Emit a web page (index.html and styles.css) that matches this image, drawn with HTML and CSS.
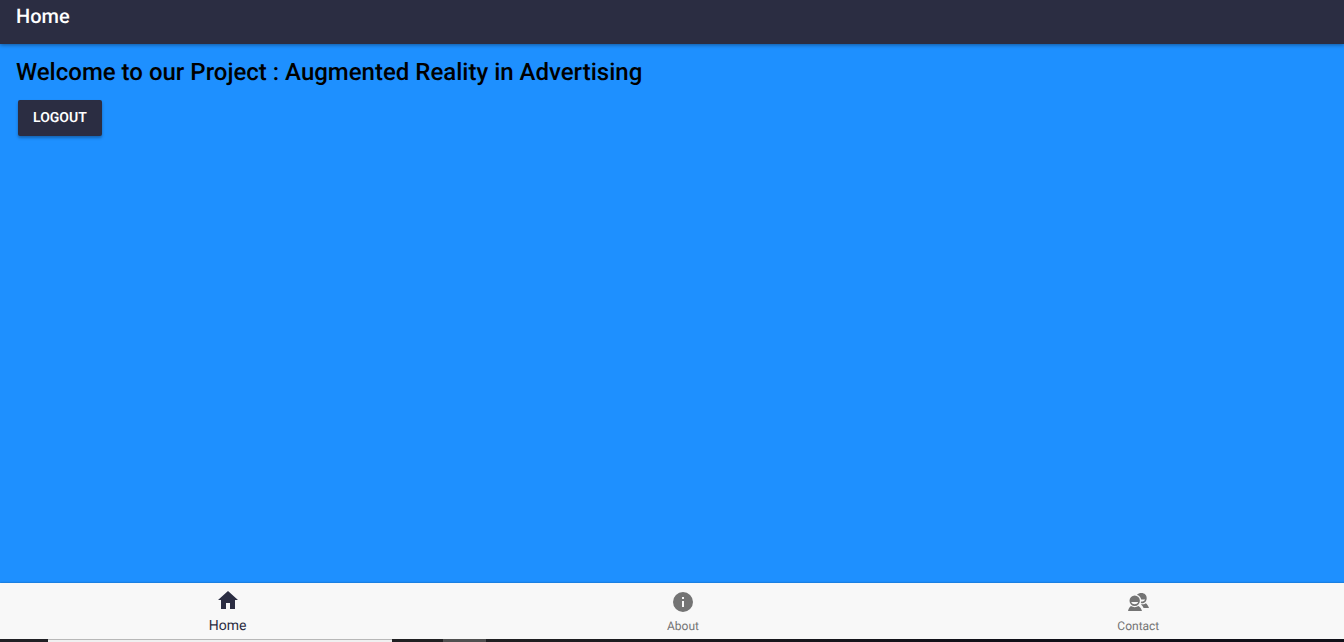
FILE: index.html
```html
<!DOCTYPE html>
<html lang="en">
<head>
<meta charset="utf-8">
<meta name="viewport" content="width=device-width, initial-scale=1">
<title>Home</title>
<link rel="stylesheet" href="styles.css">
</head>
<body>
<header class="toolbar"><div class="toolbar-title">Home</div></header>
<main class="content">
  <h1 class="welcome">Welcome to our Project : Augmented Reality in Advertising</h1>
  <button class="logout" type="button">Logout</button>
</main>
<nav class="tabs" aria-label="Main">
  <a class="tab tab-active" href="#home" aria-current="page">
    <svg class="tab-icon" viewBox="0 0 24 24" aria-hidden="true"><path d="M10 21v-6h4v6h5v-9h3L12 3 2 12h3v9z"/></svg>
    <span>Home</span>
  </a>
  <a class="tab" href="#about">
    <svg class="tab-icon" viewBox="0 0 24 24" aria-hidden="true"><path fill-rule="evenodd" d="M12 2a10 10 0 1 0 0 20a10 10 0 0 0 0-20zM11 11h2v6h-2zM11 7h2v2h-2z"/></svg>
    <span>About</span>
  </a>
  <a class="tab" href="#contact">
    <svg class="tab-icon" viewBox="0 0 24 24" aria-hidden="true">
      <path d="M11 4.800C12 3.500 13.600 3 15.400 3c3.300 0 5.300 2.200 5.300 5.200c0 3-2.200 5-4.900 5l-1-.2c.2-.5.400-.9.400-1.400c2 .1 3.500-.8 4-2.100h-4C14.500 6.900 13.200 5.500 11 4.800z"/>
      <path d="M15.300 14.200c2.100.5 4.100-.3 4.500-.9c1.300.9 2.500 2.700 3.200 4.700h-5.400c-.6-1.500-1.500-2.700-2.600-3.600z"/>
      <path fill-rule="evenodd" d="M8.700 5.600a5.200 5.200 0 1 0 0 10.400a5.200 5.200 0 0 0 0-10.400zM5.200 12.100h7c-.6 1.500-1.900 2.200-3.500 2.200s-2.900-.7-3.500-2.200z"/>
      <path d="M4.900 16.100c2.100 1.400 5.500 1.400 7.600 0c1.700 1 2.900 2.800 3.500 4.900H2c.5-2.100 1.500-3.900 2.900-4.900z"/>
    </svg>
    <span>Contact</span>
  </a>
</nav>
<footer class="edge"></footer>
</body>
</html>
```
FILE: styles.css
```css
* { box-sizing: border-box; }
body {
  display: flex;
  flex-direction: column;
  min-height: 100vh;
  margin: 0;
  overflow: hidden;
  background: #1e90ff;
  font-family: Roboto, "Liberation Sans", sans-serif;
  text-rendering: geometricPrecision;
}
.toolbar {
  height: 44px;
  padding: 4px 16px;
  background: #2b2d42;
  color: #fff;
  box-shadow: 0 1px 4px rgba(0, 0, 0, .4);
}
.toolbar-title { font-size: 20px; font-weight: 500; line-height: 24px; }
.content { flex: 1; padding: 12px 16px; }
.welcome {
  margin: 0 0 12px;
  color: #000;
  font-size: 24px;
  font-weight: 500;
  line-height: 32px;
}
.logout {
  display: block;
  height: 36px;
  margin: 0 2px;
  padding: 1px 15px 0;
  border: 0;
  border-radius: 2px;
  background: #2b2d42;
  color: #fff;
  font: 600 14px/35px Roboto, "Liberation Sans", sans-serif;
  text-rendering: geometricPrecision;
  text-transform: uppercase;
  box-shadow: 0 2px 3px rgba(0, 0, 0, .3);
}
/* The bar runs past the right edge of the window. */
.tabs {
  display: flex;
  height: 56px;
  margin-right: -22px;
  background: #f8f8f8;
  box-shadow: 0 0 2px rgba(0, 0, 0, .35);
}
.tab {
  display: flex;
  flex: 1;
  flex-direction: column;
  align-items: center;
  gap: 4px;
  padding-top: 7px;
  color: #747474;
  font-size: 12px;
  line-height: 16px;
  text-decoration: none;
}
.tab-active {
  gap: 6px;
  padding-top: 5px;
  color: #2b2d42;
  font-size: 14px;
}
.tab-icon { width: 24px; height: 24px; fill: currentColor; }
.edge {
  height: 3px;
  background: linear-gradient(90deg, #202024 48px, #f0f0f0 48px 392px, #202022 392px 443px, #505050 443px 486px, #202022 486px, #101018 1000px);
}
.edge::before {
  content: "";
  display: block;
  width: 344px;
  height: 1px;
  margin-left: 48px;
  background: #b8b8b8;
}
```
